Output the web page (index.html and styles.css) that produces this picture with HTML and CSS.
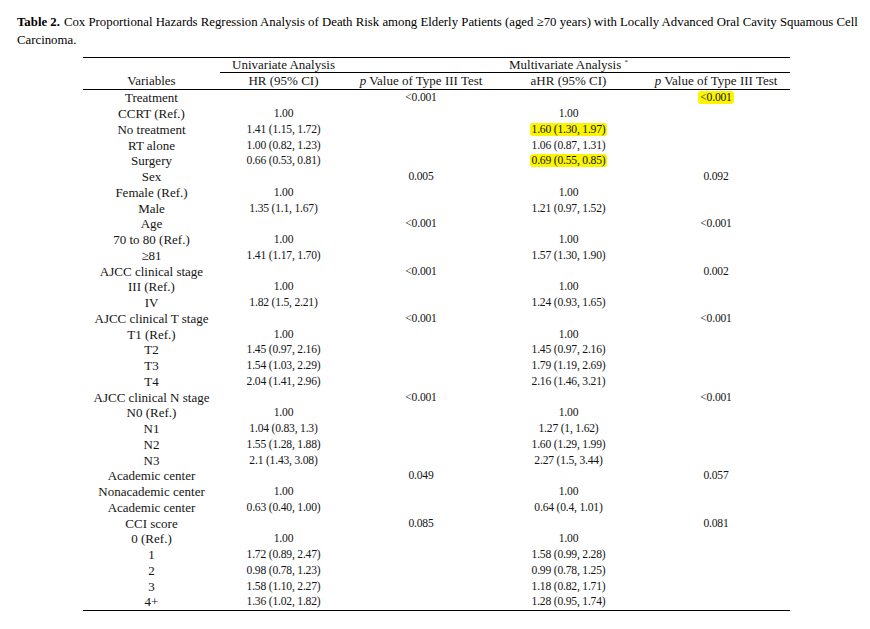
FILE: index.html
```html
<!DOCTYPE html>
<html lang="en">
<head>
<meta charset="utf-8">
<title>Table 2</title>
<link rel="stylesheet" href="styles.css">
</head>
<body>
<div class="page">
  <p class="caption"><b class="label">Table 2.</b><span>Cox Proportional Hazards Regression Analysis of Death Risk among Elderly Patients (aged ≥70 years) with Locally Advanced Oral Cavity Squamous Cell</span><br><span>Carcinoma.</span></p>
  <table class="cox">
    <colgroup>
      <col class="c1"><col class="c2"><col class="c3"><col class="c4"><col class="c5">
    </colgroup>
    <thead>
      <tr class="group">
        <th class="blank"></th>
        <th>Univariate Analysis</th>
        <th></th>
        <th>Multivariate Analysis <sup>*</sup></th>
        <th></th>
      </tr>
      <tr class="cols">
        <th>Variables</th>
        <th>HR (95% CI)</th>
        <th><i>p</i> Value of Type III Test</th>
        <th>aHR (95% CI)</th>
        <th><i>p</i> Value of Type III Test</th>
      </tr>
    </thead>
    <tbody>
      <tr><td>Treatment</td><td></td><td class="n">&lt;0.001</td><td></td><td class="n"><span class="hl">&lt;0.001</span></td></tr>
      <tr><td>CCRT (Ref.)</td><td class="n">1.00</td><td></td><td class="n">1.00</td><td></td></tr>
      <tr><td>No treatment</td><td class="n">1.41 (1.15, 1.72)</td><td></td><td class="n"><span class="hl">1.60 (1.30, 1.97)</span></td><td></td></tr>
      <tr><td>RT alone</td><td class="n">1.00 (0.82, 1.23)</td><td></td><td class="n">1.06 (0.87, 1.31)</td><td></td></tr>
      <tr><td>Surgery</td><td class="n">0.66 (0.53, 0.81)</td><td></td><td class="n"><span class="hl">0.69 (0.55, 0.85)</span></td><td></td></tr>
      <tr><td>Sex</td><td></td><td class="n">0.005</td><td></td><td class="n">0.092</td></tr>
      <tr><td>Female (Ref.)</td><td class="n">1.00</td><td></td><td class="n">1.00</td><td></td></tr>
      <tr><td>Male</td><td class="n">1.35 (1.1, 1.67)</td><td></td><td class="n">1.21 (0.97, 1.52)</td><td></td></tr>
      <tr><td>Age</td><td></td><td class="n">&lt;0.001</td><td></td><td class="n">&lt;0.001</td></tr>
      <tr><td>70 to 80 (Ref.)</td><td class="n">1.00</td><td></td><td class="n">1.00</td><td></td></tr>
      <tr><td>≥81</td><td class="n">1.41 (1.17, 1.70)</td><td></td><td class="n">1.57 (1.30, 1.90)</td><td></td></tr>
      <tr><td>AJCC clinical stage</td><td></td><td class="n">&lt;0.001</td><td></td><td class="n">0.002</td></tr>
      <tr><td>III (Ref.)</td><td class="n">1.00</td><td></td><td class="n">1.00</td><td></td></tr>
      <tr><td>IV</td><td class="n">1.82 (1.5, 2.21)</td><td></td><td class="n">1.24 (0.93, 1.65)</td><td></td></tr>
      <tr><td>AJCC clinical T stage</td><td></td><td class="n">&lt;0.001</td><td></td><td class="n">&lt;0.001</td></tr>
      <tr><td>T1 (Ref.)</td><td class="n">1.00</td><td></td><td class="n">1.00</td><td></td></tr>
      <tr><td>T2</td><td class="n">1.45 (0.97, 2.16)</td><td></td><td class="n">1.45 (0.97, 2.16)</td><td></td></tr>
      <tr><td>T3</td><td class="n">1.54 (1.03, 2.29)</td><td></td><td class="n">1.79 (1.19, 2.69)</td><td></td></tr>
      <tr><td>T4</td><td class="n">2.04 (1.41, 2.96)</td><td></td><td class="n">2.16 (1.46, 3.21)</td><td></td></tr>
      <tr><td>AJCC clinical N stage</td><td></td><td class="n">&lt;0.001</td><td></td><td class="n">&lt;0.001</td></tr>
      <tr><td>N0 (Ref.)</td><td class="n">1.00</td><td></td><td class="n">1.00</td><td></td></tr>
      <tr><td>N1</td><td class="n">1.04 (0.83, 1.3)</td><td></td><td class="n">1.27 (1, 1.62)</td><td></td></tr>
      <tr><td>N2</td><td class="n">1.55 (1.28, 1.88)</td><td></td><td class="n">1.60 (1.29, 1.99)</td><td></td></tr>
      <tr><td>N3</td><td class="n">2.1 (1.43, 3.08)</td><td></td><td class="n">2.27 (1.5, 3.44)</td><td></td></tr>
      <tr><td>Academic center</td><td></td><td class="n">0.049</td><td></td><td class="n">0.057</td></tr>
      <tr><td>Nonacademic center</td><td class="n">1.00</td><td></td><td class="n">1.00</td><td></td></tr>
      <tr><td>Academic center</td><td class="n">0.63 (0.40, 1.00)</td><td></td><td class="n">0.64 (0.4, 1.01)</td><td></td></tr>
      <tr><td>CCI score</td><td></td><td class="n">0.085</td><td></td><td class="n">0.081</td></tr>
      <tr><td>0 (Ref.)</td><td class="n">1.00</td><td></td><td class="n">1.00</td><td></td></tr>
      <tr><td>1</td><td class="n">1.72 (0.89, 2.47)</td><td></td><td class="n">1.58 (0.99, 2.28)</td><td></td></tr>
      <tr><td>2</td><td class="n">0.98 (0.78, 1.23)</td><td></td><td class="n">0.99 (0.78, 1.25)</td><td></td></tr>
      <tr><td>3</td><td class="n">1.58 (1.10, 2.27)</td><td></td><td class="n">1.18 (0.82, 1.71)</td><td></td></tr>
      <tr><td>4+</td><td class="n">1.36 (1.02, 1.82)</td><td></td><td class="n">1.28 (0.95, 1.74)</td><td></td></tr>
    </tbody>
  </table>
</div>
</body>
</html>
```
FILE: styles.css
```css
html, body {
  margin: 0;
  padding: 0;
  background: #ffffff;
}

.page {
  padding: 14px 0 0 17px;
  font-family: "Liberation Serif", "Times New Roman", serif;
  color: #141414;
}

.caption {
  margin: 0;
  width: 850px;
  font-size: 12.8px;
  line-height: 17.5px;
  color: #000;
  white-space: nowrap;
}

.caption .label {
  margin-right: 4px;
}

.cox {
  margin: 8px 0 0 66px;
  border-collapse: collapse;
  table-layout: fixed;
  width: 707px;
  font-size: 13px;
}

.c1 { width: 137px; }
.c2 { width: 127px; }
.c3 { width: 148px; }
.c4 { width: 147px; }
.c5 { width: 148px; }

.cox th {
  font-weight: normal;
  padding: 0;
  text-align: center;
  white-space: nowrap;
}

.cox th i { font-style: italic; }

.group th {
  height: 14px;
  line-height: 14px;
  border-top: 1px solid #000;
  border-bottom: 1px solid #000;
}

.group th.blank {
  border-bottom: none;
}

.group sup {
  font-size: 7px;
  vertical-align: 5px;
  line-height: 0;
}

.cols th {
  height: 16px;
  line-height: 16px;
  border-bottom: 1px solid #000;
}

.cox td {
  padding: 0;
  height: 15.76px;
  line-height: 15px;
  text-align: center;
  white-space: nowrap;
}

.cox td.n {
  font-size: 11.6px;
  letter-spacing: -0.2px;
}

.cox tbody tr:last-child td {
  border-bottom: 1px solid #000;
}

.hl {
  background: #fbf500;
  border-radius: 3px;
  padding: 0 2px;
}
```
